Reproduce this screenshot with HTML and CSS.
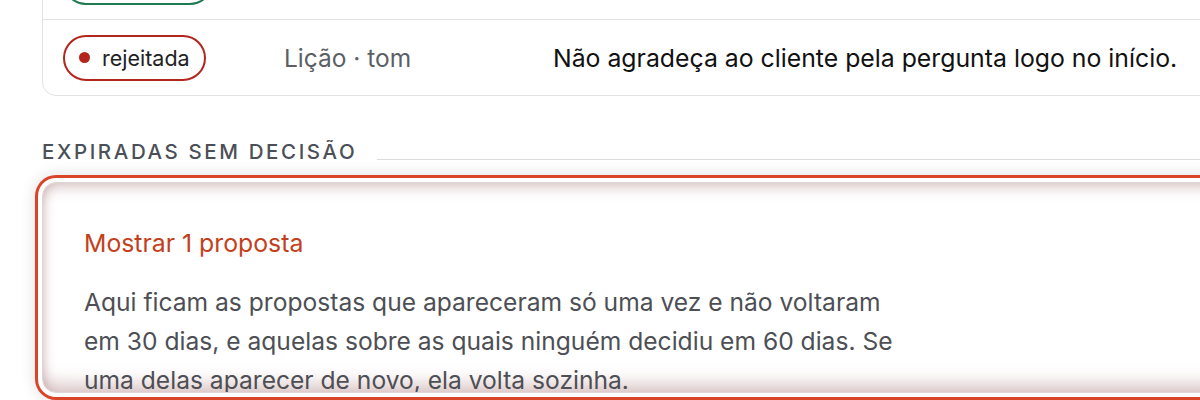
FILE: index.html
```html
<!DOCTYPE html>
<html lang="pt-BR">
<head>
  <meta charset="UTF-8" />
  <meta name="viewport" content="width=device-width, initial-scale=1.0"/>
  <title>Propostas</title>
  <link rel="stylesheet" href="styles.css">
</head>
<body>

  <div class="page">
    <div class="card">
      <div class="row">
        <span class="pill pill-ok"><span class="dot"></span>aprovada</span>
        <span class="meta">Lição · tom</span>
        <span class="text">Responda primeiro à pergunta do cliente.</span>
      </div>
      <div class="row">
        <span class="pill pill-bad"><span class="dot"></span>rejeitada</span>
        <span class="meta">Lição · tom</span>
        <span class="text">Não agradeça ao cliente pela pergunta logo no início.</span>
      </div>
    </div>

    <h3 class="section-title">Expiradas sem decisão</h3>

    <details class="expired" open>
      <summary>Mostrar 1 proposta</summary>
      <p class="hint">
        Aqui ficam as propostas que apareceram só uma vez e não voltaram
        em 30 dias, e aquelas sobre as quais ninguém decidiu em 60 dias. Se
        uma delas aparecer de novo, ela volta sozinha.
      </p>
    </details>
  </div>

</body>
</html>
```

FILE: styles.css
```css
html, body {
  margin: 0;
  height: 400px;
  overflow: hidden;
  background: #fff;
}

body {
  font-family: Inter, 'Noto Sans', sans-serif;
  color: #1f1f1f;
}

.page {
  width: 1240px;
  padding-left: 42px;
  margin-top: -57px;
}

.card {
  border: 1px solid #e2e2e2;
  border-radius: 14px;
  background: #fff;
}

.row {
  display: grid;
  grid-template-columns: 221px 269px 1fr;
  align-items: center;
  height: 75px;
  padding: 0 20px;
}

.row + .row {
  border-top: 1px solid #e4e4e4;
}

.pill {
  display: inline-flex;
  align-items: center;
  gap: 12px;
  justify-self: start;
  height: 42px;
  padding: 0 14px;
  border: 2px solid;
  border-radius: 999px;
  font-size: 21.5px;
  color: #222;
}

.dot {
  width: 11px;
  height: 11px;
  border-radius: 50%;
}

.pill-ok {
  border-color: #1f7a52;
}

.pill-ok .dot {
  background: #1f7a52;
}

.pill-bad {
  border-color: #b3261e;
}

.pill-bad .dot {
  background: #b3261e;
}

.meta {
  font-size: 24.5px;
  color: #5c5f66;
}

.text {
  font-size: 24.8px;
  color: #111;
}

.section-title {
  display: flex;
  align-items: flex-end;
  margin: 42px 0 0;
  font-size: 20.5px;
  line-height: 28px;
  font-weight: 500;
  letter-spacing: 2.6px;
  text-transform: uppercase;
  color: #4b5058;
}

.section-title::after {
  content: "";
  flex: 1;
  height: 1px;
  margin: 0 0 6px 20px;
  background: #dcdcdc;
}

.expired {
  box-sizing: border-box;
  height: 211px;
  margin-top: 16px;
  padding: 42px 41px 0;
  border: 1px solid #ddd6d6;
  border-radius: 14px;
  overflow: hidden;
  background: #fff;
  box-shadow:
    0 0 0 4px #fff,
    0 0 0 7px #da4527,
    0 0 14px 9px rgba(0, 0, 0, 0.1),
    inset 0 12px 14px -8px rgba(150, 90, 90, 0.35),
    inset 0 -16px 18px -8px rgba(150, 90, 90, 0.35),
    inset 8px 0 12px -8px rgba(150, 90, 90, 0.3);
}

.expired summary {
  list-style: none;
  font-size: 24.8px;
  line-height: 36px;
  color: #c4401c;
  cursor: pointer;
}

.expired summary::-webkit-details-marker {
  display: none;
}

.hint {
  max-width: 835px;
  margin: 22px 0 0;
  font-size: 24.6px;
  line-height: 39px;
  color: #4d4f55;
}
```
